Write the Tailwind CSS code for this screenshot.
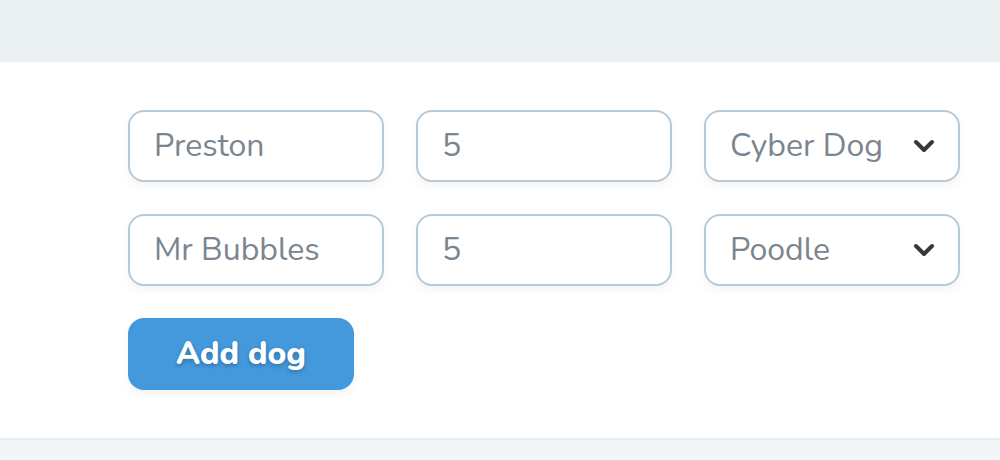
<!DOCTYPE html>
<html lang="en">
<head>
<meta charset="utf-8">
<title>Add dogs</title>
<script src="https://cdn.jsdelivr.net/npm/@tailwindcss/browser@4"></script>
</head>
<body class="flex min-h-screen flex-col bg-[#f2f6f9] font-['Nunito','Open_Sans',sans-serif] text-[#7b8590]">
<header class="h-[62px] bg-[#ebf0f3]"></header>
<form class="border-b-2 border-[#e9eef2] bg-white py-12 pr-10 pl-32">
  <div class="grid grid-cols-3 gap-8">
    <input aria-label="Name of dog 1" value="Preston" class="h-18 w-full min-w-0 rounded-2xl border-2 border-[#b8c9d6] bg-white px-6 pb-px text-[32px] font-normal shadow-[0_4px_8px_rgb(0_0_0/0.05)]">
    <input aria-label="Age of dog 1" value="5" class="h-18 w-full min-w-0 rounded-2xl border-2 border-[#b8c9d6] bg-white px-6 pb-px text-[32px] font-normal shadow-[0_4px_8px_rgb(0_0_0/0.05)]">
    <div class="relative">
      <select aria-label="Breed of dog 1" class="h-18 w-full appearance-none rounded-2xl border-2 border-[#b8c9d6] bg-white px-6 text-[32px] font-normal shadow-[0_4px_8px_rgb(0_0_0/0.05)]"><option>Cyber Dog</option><option>Poodle</option></select>
      <svg class="pointer-events-none absolute top-6 right-6 size-6" viewBox="0 0 24 24" fill="none" stroke="#35383d" stroke-width="4" stroke-linecap="round" stroke-linejoin="round"><path d="M4 8l8 8 8-8"/></svg>
    </div>
    <input aria-label="Name of dog 2" value="Mr Bubbles" class="h-18 w-full min-w-0 rounded-2xl border-2 border-[#b8c9d6] bg-white px-6 pb-px text-[32px] font-normal shadow-[0_4px_8px_rgb(0_0_0/0.05)]">
    <input aria-label="Age of dog 2" value="5" class="h-18 w-full min-w-0 rounded-2xl border-2 border-[#b8c9d6] bg-white px-6 pb-px text-[32px] font-normal shadow-[0_4px_8px_rgb(0_0_0/0.05)]">
    <div class="relative">
      <select aria-label="Breed of dog 2" class="h-18 w-full appearance-none rounded-2xl border-2 border-[#b8c9d6] bg-white px-6 text-[32px] font-normal shadow-[0_4px_8px_rgb(0_0_0/0.05)]"><option>Poodle</option><option>Cyber Dog</option></select>
      <svg class="pointer-events-none absolute top-6 right-6 size-6" viewBox="0 0 24 24" fill="none" stroke="#35383d" stroke-width="4" stroke-linecap="round" stroke-linejoin="round"><path d="M4 8l8 8 8-8"/></svg>
    </div>
  </div>
  <button type="button" class="mt-8 block h-18 rounded-2xl bg-[#4499dc] px-12 text-[32px] font-extrabold text-white shadow-[0_4px_8px_rgb(0_0_0/0.05)] text-shadow-[0_2px_4px_rgb(0_0_0/0.25)]">Add dog</button>
</form>
</body>
</html>
